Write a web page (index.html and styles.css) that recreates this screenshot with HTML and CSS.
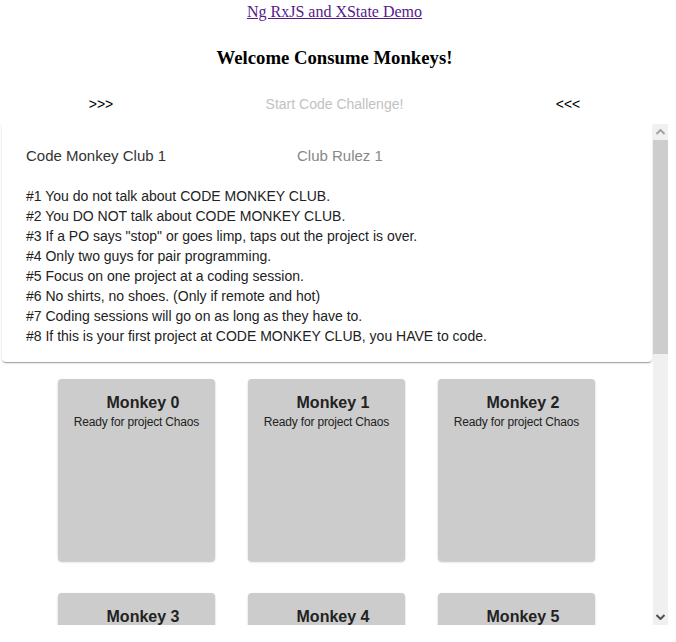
FILE: index.html
```html
<!DOCTYPE html>
<html>
<head>
<meta charset="utf-8">
<link rel="stylesheet" href="styles.css">
</head>
<body>
<div class="top">
  <div class="nav"><a class="demo-link" href="#">Ng RxJS and XState Demo</a></div>
  <h3 class="welcome">Welcome Consume Monkeys!</h3>
  <div class="controls">
    <button class="btn">&gt;&gt;&gt;</button>
    <button class="btn disabled">Start Code Challenge!</button>
    <button class="btn">&lt;&lt;&lt;</button>
  </div>
</div>
<div class="main">
  <div class="content">
    <div class="card">
      <div class="card-head">
        <span class="club">Code Monkey Club 1</span>
        <span class="rulez">Club Rulez 1</span>
      </div>
      <div class="rules">
        <div>#1 You do not talk about CODE MONKEY CLUB.</div>
        <div>#2 You DO NOT talk about CODE MONKEY CLUB.</div>
        <div>#3 If a PO says "stop" or goes limp, taps out the project is over.</div>
        <div>#4 Only two guys for pair programming.</div>
        <div>#5 Focus on one project at a coding session.</div>
        <div>#6 No shirts, no shoes. (Only if remote and hot)</div>
        <div>#7 Coding sessions will go on as long as they have to.</div>
        <div>#8 If this is your first project at CODE MONKEY CLUB, you HAVE to code.</div>
      </div>
    </div>
    <div class="tiles">
      <div class="tile"><div class="t-name">Monkey 0</div><div class="t-sub">Ready for project Chaos</div></div>
      <div class="tile"><div class="t-name">Monkey 1</div><div class="t-sub">Ready for project Chaos</div></div>
      <div class="tile"><div class="t-name">Monkey 2</div><div class="t-sub">Ready for project Chaos</div></div>
      <div class="tile"><div class="t-name">Monkey 3</div><div class="t-sub">Ready for project Chaos</div></div>
      <div class="tile"><div class="t-name">Monkey 4</div><div class="t-sub">Ready for project Chaos</div></div>
      <div class="tile"><div class="t-name">Monkey 5</div><div class="t-sub">Ready for project Chaos</div></div>
    </div>
  </div>
  <div class="vbar">
    <div class="vbtn">
      <svg width="9" height="6" viewBox="0 0 9 6"><path d="M0.5 5 L4.5 1 L8.5 5" fill="none" stroke="#a3a3a3" stroke-width="2"/></svg>
    </div>
    <div class="vtrack"><div class="vthumb"></div></div>
    <div class="vbtn">
      <svg width="9" height="6" viewBox="0 0 9 6"><path d="M0.5 1 L4.5 5 L8.5 1" fill="none" stroke="#505050" stroke-width="2"/></svg>
    </div>
  </div>
</div>
</body>
</html>
```
FILE: styles.css
```css
html, body {
  margin: 0;
  padding: 0;
  background: #fff;
}
body {
  width: 676px;
  height: 642px;
  overflow: hidden;
  font-family: "Liberation Serif", "Times New Roman", serif;
}
.top {
  width: 669px;
}
.nav {
  text-align: center;
  padding-top: 3px;
  line-height: 18px;
  font-size: 16px;
  height: 21px;
}
.demo-link {
  color: #551a8b;
  text-decoration: underline;
}
.welcome {
  margin: 23px 0 0 0;
  text-align: center;
  font-size: 18.72px;
  line-height: 22px;
  font-weight: bold;
  color: #000;
}
.controls {
  display: flex;
  justify-content: space-between;
  align-items: center;
  height: 35px;
  margin: 18px 0 2px 0;
  padding: 0 69px 0 69px;
}
.btn {
  font-family: "Liberation Sans", Arial, sans-serif;
  font-size: 14px;
  min-width: 64px;
  padding: 0 16px;
  height: 35px;
  line-height: 35px;
  border: none;
  background: transparent;
  color: #000;
  white-space: nowrap;
}
.btn.disabled {
  color: #c2c2c2;
}
.main {
  display: flex;
  width: 668px;
  height: 501px;
  font-family: "Liberation Sans", Arial, sans-serif;
}
.content {
  width: 653px;
  height: 501px;
  overflow: hidden;
}
.vbar {
  width: 15px;
  display: flex;
  flex-direction: column;
  background: #f0f0f0;
}
.vbtn {
  height: 16px;
  display: flex;
  align-items: center;
  justify-content: center;
  flex: none;
}
.vtrack {
  flex: 1;
}
.vthumb {
  height: 214px;
  background: #cdcdcd;
}
.card {
  margin: 0 0 0 2px;
  width: 650px;
  box-sizing: border-box;
  background: #fff;
  border-radius: 0 0 4px 4px;
  box-shadow: 0 2px 1px -1px rgba(0,0,0,.2), 0 1px 1px 0 rgba(0,0,0,.14), 0 1px 3px 0 rgba(0,0,0,.12);
  padding: 14px 24px 16px 24px;
}
.card-head {
  display: flex;
  height: 36px;
  line-height: 36px;
  font-size: 15px;
}
.club {
  color: #333;
  width: 271px;
}
.rulez {
  color: #888;
}
.rules {
  margin-top: 12px;
  font-size: 14px;
  line-height: 20px;
  color: #222;
}
.tiles {
  display: grid;
  grid-template-columns: repeat(3, 157px);
  column-gap: 33px;
  row-gap: 32px;
  justify-content: center;
  padding: 17px 0 8px 0;
}
.tile {
  height: 182px;
  background: #cccccc;
  border-radius: 4px;
  box-shadow: 0 1px 2px rgba(0,0,0,.25);
  box-sizing: border-box;
  padding-top: 14px;
  text-align: center;
  color: #222;
}
.t-name {
  font-size: 16px;
  font-weight: bold;
  line-height: 20px;
  padding-left: 13px;
}
.t-sub {
  font-size: 12px;
  line-height: 16px;
  margin-top: 1px;
  letter-spacing: -0.18px;
}
```
